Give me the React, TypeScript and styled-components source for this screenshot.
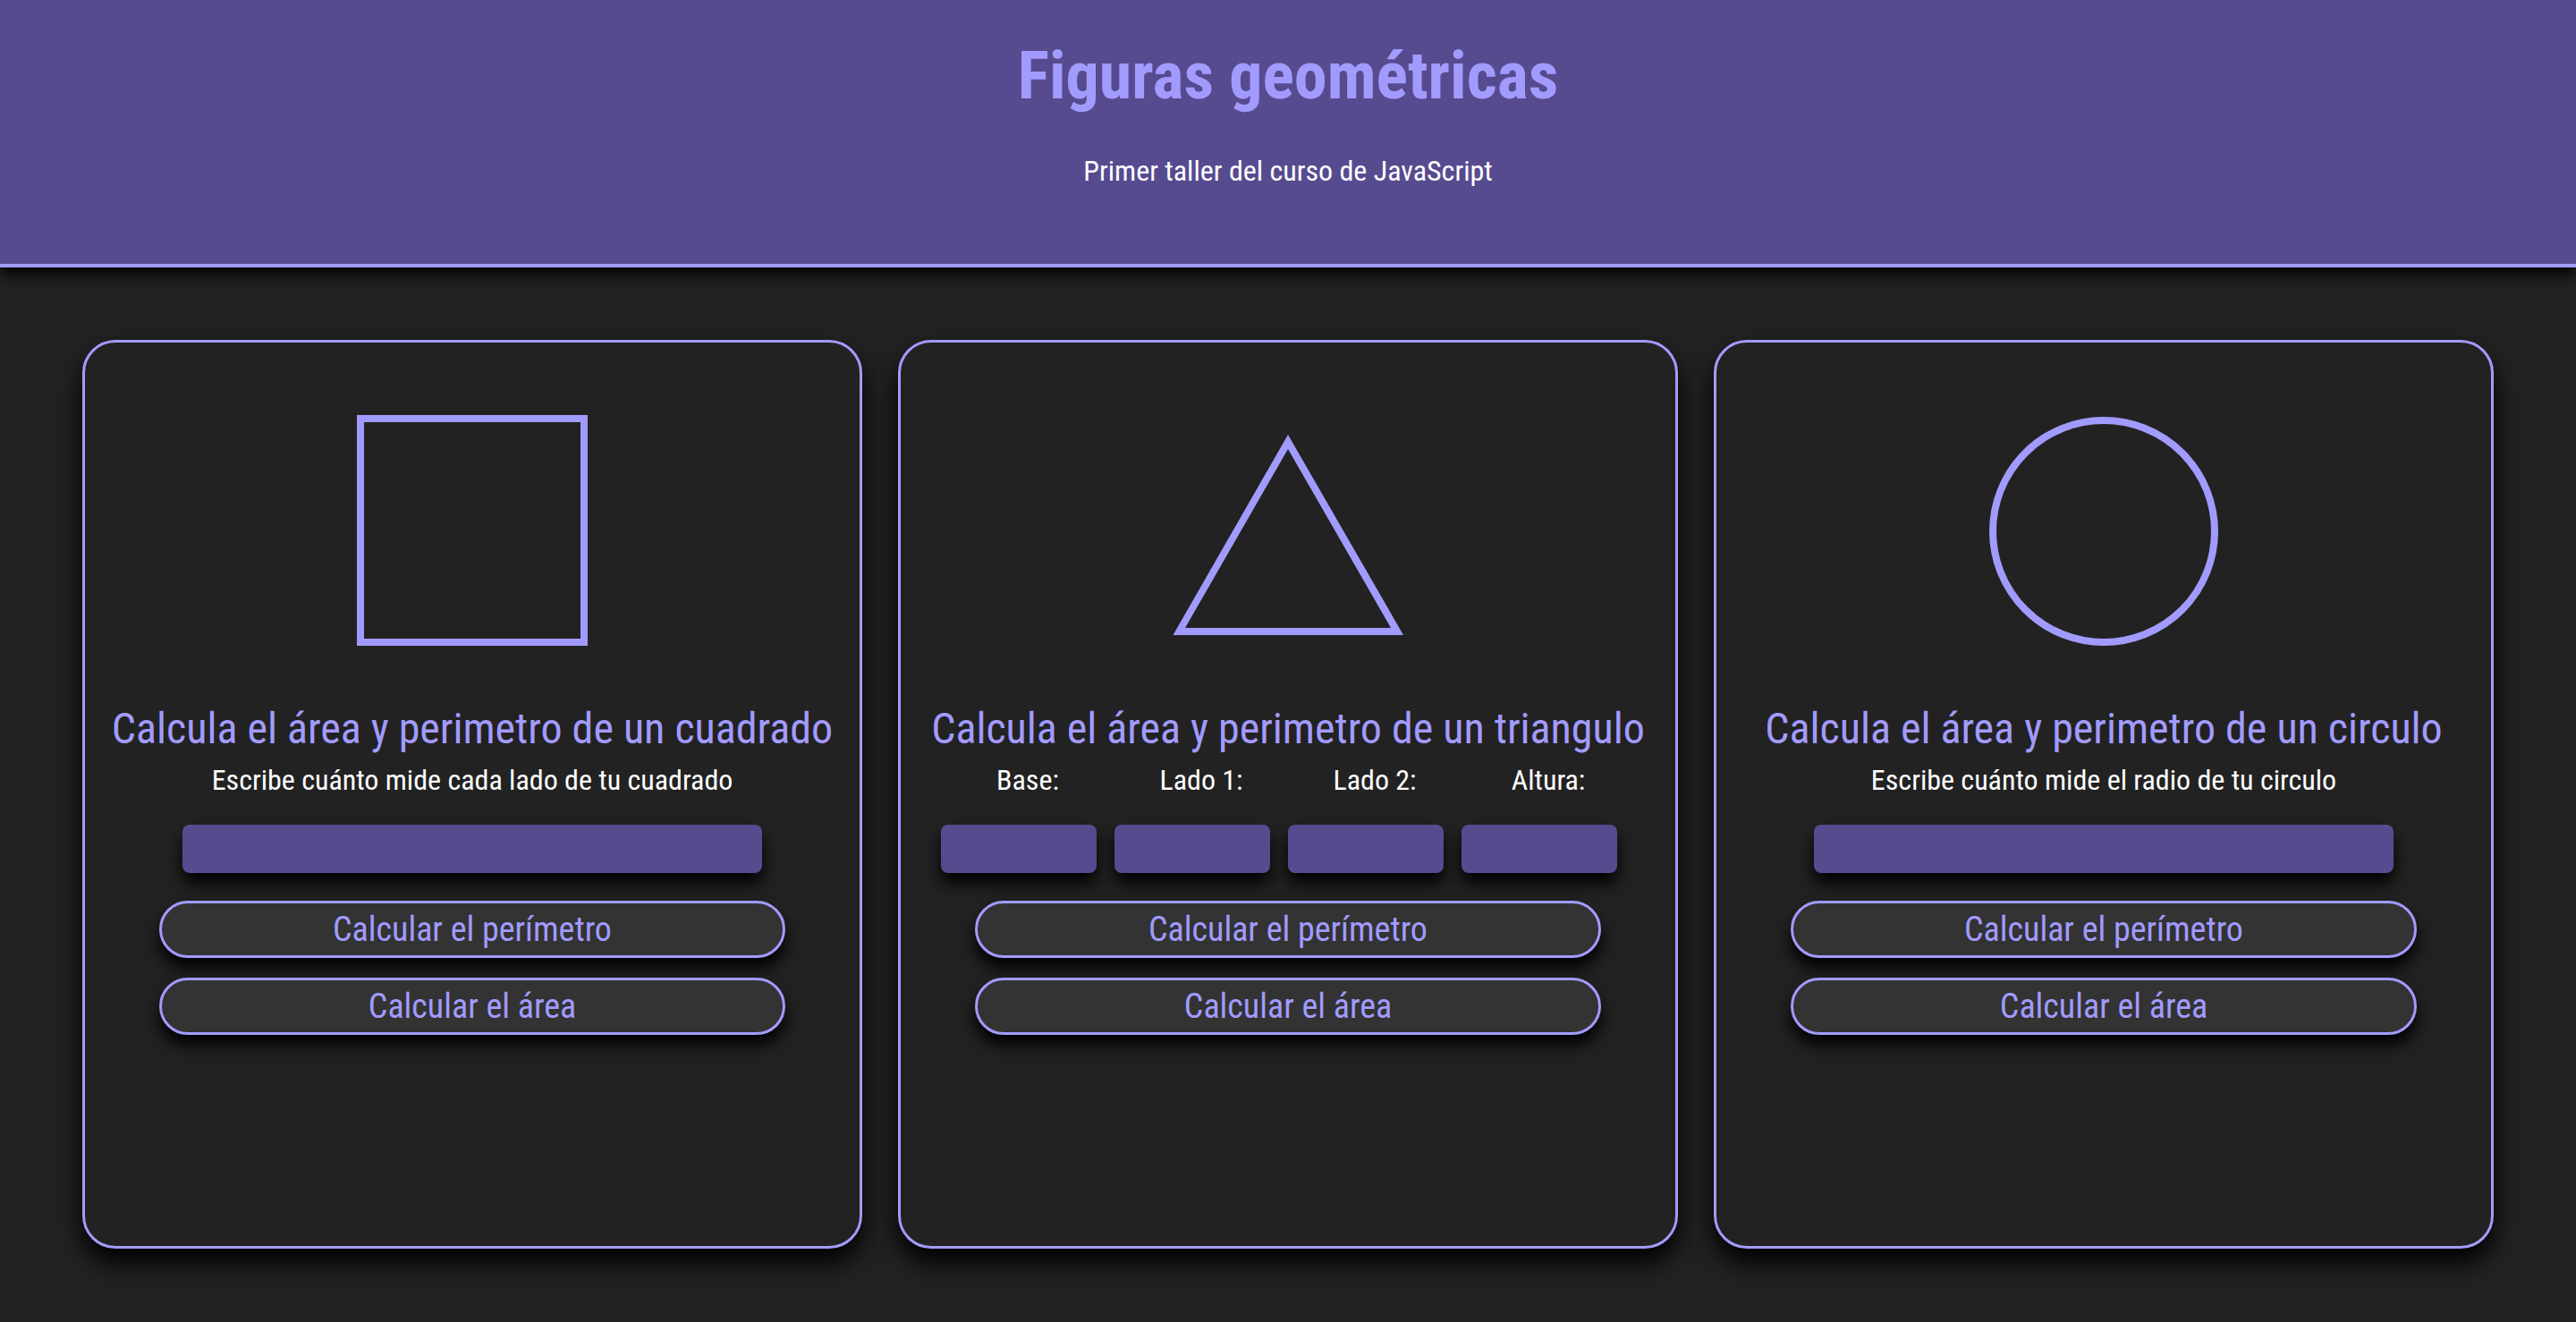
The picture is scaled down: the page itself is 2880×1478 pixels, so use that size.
import styled, { createGlobalStyle } from "styled-components";

const lavender = "#a29bfe";
const purple = "#574b90";

const GlobalStyle = createGlobalStyle`
  * {
    box-sizing: border-box;
  }
  body {
    margin: 0;
    background-color: #222222;
    font-family: "Roboto Condensed", "Roboto", "Liberation Sans", sans-serif;
    font-stretch: 75%;
    color: #ffffff;
  }
`;

const Header = styled.header`
  height: 299px;
  padding-top: 41px;
  background-color: ${purple};
  border-bottom: 4px solid ${lavender};
  box-shadow: 0 8px 16px rgba(0, 0, 0, 0.95);
  text-align: center;
  position: relative;
  z-index: 1;
`;

const Title = styled.h1`
  margin: 0;
  font-size: 74px;
  line-height: 88px;
  font-weight: 700;
  color: ${lavender};
`;

const Lead = styled.p`
  margin: 42px 0 0;
  font-size: 32px;
  line-height: 40px;
  font-weight: 400;
`;

const Main = styled.main`
  display: grid;
  grid-template-columns: repeat(3, 1fr);
  gap: 40px;
  padding: 81px 92px 82px;
`;

const Card = styled.section`
  height: 1016px;
  display: flex;
  flex-direction: column;
  align-items: center;
  padding-top: 81px;
  border: 3px solid ${lavender};
  border-radius: 37px;
  background-color: #222222;
  box-shadow: 0 16px 28px rgba(0, 0, 0, 1);
`;

const Figure = styled.svg`
  width: 258px;
  height: 258px;
  flex-shrink: 0;
`;

const CardTitle = styled.h2`
  margin: 65px 0 0;
  font-size: 48px;
  line-height: 56px;
  font-weight: 400;
  color: ${lavender};
  white-space: nowrap;
`;

const Hint = styled.p`
  margin: 9px 0 0;
  font-size: 32px;
  line-height: 40px;
  white-space: nowrap;
`;

const Input = styled.input<{ $width: number }>`
  display: block;
  width: ${(p) => p.$width}px;
  height: 54px;
  margin: 0;
  padding: 0 16px;
  border: none;
  border-radius: 8px;
  background-color: ${purple};
  color: #ffffff;
  font: inherit;
  font-size: 28px;
  box-shadow: 0 12px 18px rgba(0, 0, 0, 0.95);
  outline: none;
`;

const SingleInput = styled(Input)`
  margin-top: 30px;
`;

const Fields = styled.div`
  display: grid;
  grid-template-columns: repeat(4, 194px);
  margin-top: 9px;
`;

const Field = styled.label`
  display: flex;
  flex-direction: column;
`;

const FieldName = styled.span`
  font-size: 32px;
  line-height: 40px;
  text-align: center;
  margin-bottom: 30px;
`;

const Button = styled.button<{ $gap: number }>`
  width: 700px;
  height: 64px;
  margin-top: ${(p) => p.$gap}px;
  border: 3px solid ${lavender};
  border-radius: 40px;
  background-color: #333333;
  color: ${lavender};
  font: inherit;
  font-size: 38px;
  line-height: 1;
  box-shadow: 0 12px 18px rgba(0, 0, 0, 0.95);
  cursor: pointer;
`;

const Actions = () => (
  <>
    <Button $gap={31}>Calcular el perímetro</Button>
    <Button $gap={22}>Calcular el área</Button>
  </>
);

const Square = () => (
  <Figure viewBox="0 0 258 258">
    <rect x="4" y="4" width="250" height="250" fill="none" stroke={lavender} strokeWidth="8" />
  </Figure>
);

const Triangle = () => (
  <Figure viewBox="0 0 258 258">
    <path
      d="M129 22 L258 246 L0.5 246 Z M129 38 L244 238 L14 238 Z"
      fill={lavender}
      fillRule="evenodd"
    />
  </Figure>
);

const Circle = () => (
  <Figure viewBox="0 0 258 258">
    <circle cx="129" cy="130" r="124" fill="none" stroke={lavender} strokeWidth="8" />
  </Figure>
);

const triangleFields = ["Base:", "Lado 1:", "Lado 2:", "Altura:"];

const App = () => {
  return (
    <>
      <GlobalStyle />
      <Header>
        <Title>Figuras geométricas</Title>
        <Lead>Primer taller del curso de JavaScript</Lead>
      </Header>
      <Main>
        <Card>
          <Square />
          <CardTitle>Calcula el área y perimetro de un cuadrado</CardTitle>
          <Hint>Escribe cuánto mide cada lado de tu cuadrado</Hint>
          <SingleInput $width={648} type="number" />
          <Actions />
        </Card>

        <Card>
          <Triangle />
          <CardTitle>Calcula el área y perimetro de un triangulo</CardTitle>
          <Fields>
            {triangleFields.map((name) => (
              <Field key={name}>
                <FieldName>{name}</FieldName>
                <Input $width={174} type="number" />
              </Field>
            ))}
          </Fields>
          <Actions />
        </Card>

        <Card>
          <Circle />
          <CardTitle>Calcula el área y perimetro de un circulo</CardTitle>
          <Hint>Escribe cuánto mide el radio de tu circulo</Hint>
          <SingleInput $width={648} type="number" />
          <Actions />
        </Card>
      </Main>
    </>
  );
};

export default App;
